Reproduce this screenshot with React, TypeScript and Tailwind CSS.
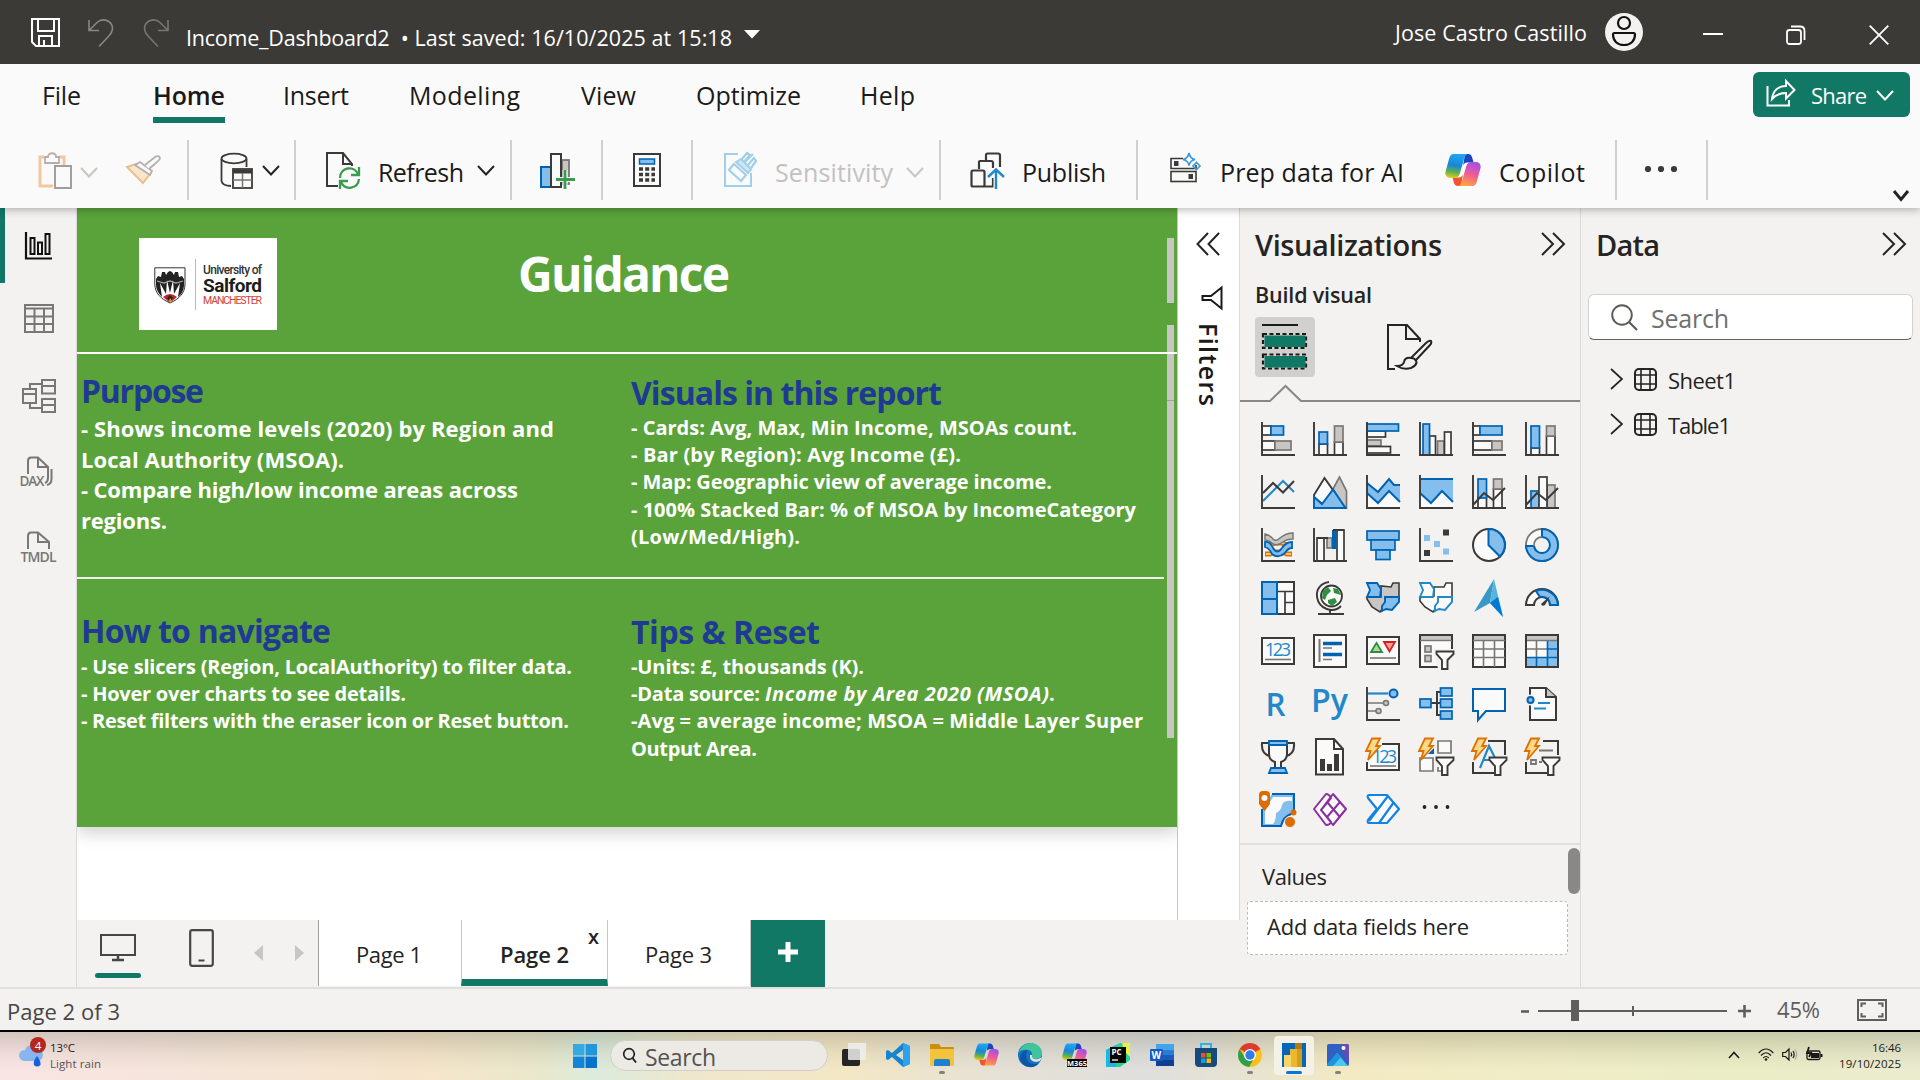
import React, { useLayoutEffect, useRef, useState } from "react";

const D = "#3b3a38";
const B = "#0063b1";
const LB = "#83beec";
const G = "#797774";
const LG = "#c8c6c4";
const W = "#fafafa";

/** One line of text whose tracking is adjusted so that it fills the length given by its class. */
function Fit({ children, className, vertical = false }: { children: string; className: string; vertical?: boolean }) {
  const box = useRef<HTMLDivElement>(null);
  const inner = useRef<HTMLSpanElement>(null);
  const [ls, setLs] = useState(0);
  useLayoutEffect(() => {
    if (!box.current || !inner.current) return;
    const side = vertical ? "height" : "width";
    const natural = inner.current.getBoundingClientRect()[side];
    setLs((box.current.getBoundingClientRect()[side] - natural) / Math.max(1, children.length - 1));
  }, [children, vertical]);
  return (
    <div ref={box} className={"shrink-0 whitespace-pre " + className}>
      <span ref={inner} style={{ letterSpacing: ls }}>{children}</span>
    </div>
  );
}

function Svg({ w, h, className = "", children }: { w: number; h: number; className?: string; children: React.ReactNode }) {
  return (
    <svg width={w} height={h} viewBox={`0 0 ${w} ${h}`} fill="none" className={"shrink-0 overflow-visible " + className}>
      {children}
    </svg>
  );
}

function Chevron({ className = "", color = "#252423", w = 18, sw = 2 }: { className?: string; color?: string; w?: number; sw?: number }) {
  return (
    <Svg w={w} h={11} className={className}>
      <path d={`M1 1 L${w / 2} 9.5 L${w - 1} 1`} stroke={color} strokeWidth={sw} />
    </Svg>
  );
}

const Sep = ({ className }: { className: string }) => <div className={"mt-[10px] h-[60px] w-[2px] shrink-0 bg-[#d0d0d0] " + className} />;

function CopilotIcon({ w, h, className = "", id }: { w: number; h: number; className?: string; id: string }) {
  return (
    <svg width={w} height={h} viewBox="0 0 36 32" fill="none" className={"shrink-0 " + className}>
      <defs>
        <linearGradient id={id + "a"} x1="10" y1="0" x2="6" y2="25" gradientUnits="userSpaceOnUse">
          <stop stopColor="#1ea7f2" /><stop offset=".45" stopColor="#1a86d8" /><stop offset=".72" stopColor="#5fb24a" /><stop offset="1" stopColor="#ffd21c" />
        </linearGradient>
        <linearGradient id={id + "b"} x1="30" y1="8" x2="22" y2="32" gradientUnits="userSpaceOnUse">
          <stop stopColor="#a14df0" /><stop offset=".5" stopColor="#ee5a96" /><stop offset="1" stopColor="#ffa23f" />
        </linearGradient>
      </defs>
      <path d="M20 0h3c2.500 0 3.600 1.500 4.300 4l1.300 4.500H22c-2 0-3.500 1.500-4 3.500z" fill="#1c45c4" />
      <path d="M16 32h-3c-2.500 0-3.600-1.500-4.300-4L7.500 23.500H14c2 0 3.500-1.500 4-3.500z" fill="#ee5530" />
      <path d="M8.500 0H23c-2.300.400-3.300 2.500-4 5l-4 14c-.8 2.900-2.300 5-5.500 5H5.200C1.500 24-.4 21 .6 17.500L4 5C5 1.800 6.200 0 8.500 0z" fill={`url(#${id}a)`} />
      <path d="M27.500 32H13c2.300-.4 3.300-2.500 4-5l4-14c.8-2.900 2.300-5 5.500-5h4.300c3.700 0 5.600 3 4.600 6.500L32 27c-1 3.200-2.200 5-4.500 5z" fill={`url(#${id}b)`} />
    </svg>
  );
}

function TitleBar() {
  return (
    <div className="flex h-[64px] items-start bg-[#3b3a37] text-white">
      <Svg w={30} h={30} className="ml-[31px] mt-[18px]">
        <path d="M1 1H28V28H5L1 24Z M7 1V13H23V1 M8 28V18H21V28 M13 22V27" stroke="#fff" strokeWidth="2" />
      </Svg>
      <Svg w={26} h={29} className="ml-[27px] mt-[18px]">
        <path d="M1 2V12.500H11 M1.500 12L9 4.500C15-1 24 3 24.500 10C24.500 14 23 16 20 19L11 28.500" stroke="#8a8886" strokeWidth="1.600" />
      </Svg>
      <Svg w={26} h={29} className="ml-[29px] mt-[18px]">
        <path d="M25 2V12.500H15 M24.500 12L17 4.500C11-1 2 3 1.500 10C1.500 14 3 16 6 19L15 28.500" stroke="#797775" strokeWidth="1.600" />
      </Svg>
      <Fit className="ml-[17px] mt-[23px] w-[209px] text-[21.5px] leading-[30px]">Income_Dashboard2 </Fit>
      <Fit className="w-[337px] text-[21.5px] leading-[30px] mt-[23px]"> • Last saved: 16/10/2025 at 15:18</Fit>
      <Svg w={16} h={9} className="ml-[12px] mt-[30px]"><path d="M0 0H16L8 8.500Z" fill="#fff" /></Svg>
      <Fit className="ml-auto mt-[18px] w-[192px] text-[21.5px] leading-[30px]">Jose Castro Castillo</Fit>
      <Svg w={38} h={38} className="ml-[18px] mt-[13px]">
        <circle cx="19" cy="19" r="19" fill="#f3f2f1" />
        <circle cx="19" cy="10" r="6" stroke="#111" strokeWidth="2.200" />
        <path d="M9.500 20H28.500Q30 20 30 21.500C30 28 25.500 32 19 32S8 28 8 21.500Q8 20 9.500 20Z" stroke="#111" strokeWidth="2.200" />
      </Svg>
      <div className="ml-[60px] mt-[33px] h-[2px] w-[20px] shrink-0 bg-white" />
      <Svg w={20} h={20} className="ml-[63px] mt-[25px]">
        <rect x="1" y="5" width="14" height="14" rx="2.500" stroke="#fff" strokeWidth="1.800" />
        <path d="M5 1.500H14Q18.500 1.500 18.500 6V15" stroke="#fff" strokeWidth="1.800" />
      </Svg>
      <Svg w={20} h={20} className="ml-[63px] mr-[31px] mt-[25px]">
        <path d="M.7.700L19.300 19.300M19.300.700L.7 19.300" stroke="#fff" strokeWidth="1.800" />
      </Svg>
    </div>
  );
}

function Menu() {
  const t = "mt-[16px] text-[25px] leading-[30px] ";
  return (
    <div className="flex h-[66px] items-start text-[#1b1a19]">
      <Fit className={t + "ml-[42px] w-[39px]"}>File</Fit>
      <div className="ml-[72px] shrink-0">
        <Fit className={t + "w-[72px] font-semibold"}>Home</Fit>
        <div className="mt-[7px] h-[6px] w-[72px] bg-[#117865]" />
      </div>
      <Fit className={t + "ml-[58px] w-[66px]"}>Insert</Fit>
      <Fit className={t + "ml-[60px] w-[111px]"}>Modeling</Fit>
      <Fit className={t + "ml-[61px] w-[55px]"}>View</Fit>
      <Fit className={t + "ml-[60px] w-[105px]"}>Optimize</Fit>
      <Fit className={t + "ml-[59px] w-[55px]"}>Help</Fit>
      <div className="ml-auto mr-[10px] mt-[8px] flex h-[45px] w-[157px] shrink-0 items-start rounded-[6px] bg-[#117865] text-white">
        <Svg w={30} h={28} className="ml-[13px] mt-[7px]">
          <path d="M1.500 7V26.500H23V21" stroke="#fff" strokeWidth="2" />
          <path d="M6 20C7 12 12 7 20 7V2L28.500 11L20 19.500V14C14 14 10 15.500 6 20Z" stroke="#fff" strokeWidth="2" />
        </Svg>
        <Fit className="ml-[15px] mt-[8px] w-[56px] text-[22px] leading-[30px]">Share</Fit>
        <Chevron color="#fff" className="ml-[9px] mt-[18px]" />
      </div>
    </div>
  );
}

function Ribbon() {
  const t = "mt-[27px] text-[25px] leading-[30px] text-[#1b1a19] ";
  return (
    <div className="flex h-[78px] items-start">
      <Svg w={34} h={37} className="ml-[38px] mt-[22px]">
        <path d="M6 5H2V34H15M21 5H26V13" stroke="#efc7a0" strokeWidth="3" />
        <path d="M7 11V5H10C10 0 18 0 18 5H21V11Z" fill="#fafafa" stroke="#b3b0ad" strokeWidth="1.800" />
        <rect x="17" y="14" width="16" height="22" fill="#fafafa" stroke="#a19f9d" strokeWidth="2" />
      </Svg>
      <Chevron color="#c8c6c4" className="ml-[8px] mt-[37px]" />
      <Svg w={36} h={30} className="ml-[28px] mt-[25px]">
        <path d="M1 12L10 9L24 19L17 28Z" fill="#fbe6cc" stroke="#eabf90" strokeWidth="2" />
        <path d="M9 10L14 7L26 16L24 20Z" fill="#fafafa" stroke="#b3b0ad" strokeWidth="1.800" />
        <path d="M19 10L29 2Q33 0 34 3Q34 5 31 7L23 14" fill="#fafafa" stroke="#b3b0ad" strokeWidth="1.800" />
      </Svg>
      <Sep className="ml-[25px]" />
      <Svg w={33} h={36} className="ml-[31px] mt-[23px]">
        <ellipse cx="14" cy="5.500" rx="12.500" ry="4.800" stroke={D} strokeWidth="1.800" />
        <path d="M1.500 6V28C2 31 6 33 11 33M26.500 6V14" stroke={D} strokeWidth="1.800" />
        <rect x="13" y="16" width="19" height="19" fill="#fafafa" stroke={D} strokeWidth="1.800" />
        <path d="M13 18.500H32" stroke={D} strokeWidth="4" />
        <path d="M22.500 20V35M13 27H32" stroke={G} strokeWidth="1.500" />
      </Svg>
      <Chevron className="ml-[9px] mt-[35px]" />
      <Sep className="ml-[14px]" />
      <Svg w={34} h={37} className="ml-[30px] mt-[22px]">
        <path d="M12 34H1V1H17L26 12V14M17 1V12H26" stroke={D} strokeWidth="2" />
        <path d="M14 26C14 15 28 13 32 22M33 15V23H25M33 27C32 37 19 39 15 30M14 37V29H22" stroke="#3a9b4e" strokeWidth="2.300" />
      </Svg>
      <Fit className={t + "ml-[18px] w-[86px]"}>Refresh</Fit>
      <Chevron className="ml-[13px] mt-[35px]" />
      <Sep className="ml-[15px]" />
      <Svg w={36} h={37} className="ml-[28px] mt-[22px]">
        <rect x="22" y="8" width="7" height="24" fill={LG} stroke={G} strokeWidth="1.800" />
        <rect x="1" y="15" width="10" height="20" fill={LB} stroke={B} strokeWidth="2" />
        <rect x="11" y="2" width="10" height="33" fill={W} stroke={D} strokeWidth="2" />
        <path d="M25 18V37M16 27.500H35" stroke="#fafafa" strokeWidth="5" />
        <path d="M25 18V37M16 27.500H35" stroke="#3a9b4e" strokeWidth="2.800" />
      </Svg>
      <Sep className="ml-[25px]" />
      <Svg w={28} h={34} className="ml-[30px] mt-[23px]">
        <rect x="1" y="1" width="26" height="32" stroke={D} strokeWidth="2" fill={W} />
        <rect x="6.500" y="6" width="15" height="5" fill={LB} stroke={B} strokeWidth="1.500" />
        <path d="M6 16H22M6 21.500H22M6 27H22" stroke={D} strokeWidth="3.400" strokeDasharray="4 2.200" />
      </Svg>
      <Sep className="ml-[30px]" />
      <Svg w={32} h={36} className="ml-[31px] mt-[21px]">
        <path d="M14 3H1V35H27V22" stroke="#9fcfe9" strokeWidth="2" />
        <path d="M10 13L5 19L17 30L22 24Z" stroke="#9fcfe9" strokeWidth="2.200" />
        <path d="M12 11L17 8L27 18L24 22Z" fill="#cfe6f3" stroke="#9fcfe9" strokeWidth="2" />
        <path d="M18 8L23 2L26 4L20 11M24 14L30 7L32 10L27 17M21 11L29 3" stroke="#9fcfe9" strokeWidth="2.200" />
      </Svg>
      <Fit className={"mt-[27px] text-[25px] leading-[30px] ml-[19px] w-[118px] text-[#c3c1bf]"}>Sensitivity</Fit>
      <Chevron color="#c8c6c4" className="ml-[13px] mt-[37px]" />
      <Sep className="ml-[15px]" />
      <Svg w={34} h={37} className="ml-[29px] mt-[22px]">
        <path d="M16 8V3Q16 1.500 17.500 1.500H28Q30 1.500 30 3.500V15M9 17V10Q9 9 10 9H21Q23 9 23 11V16" stroke={D} strokeWidth="2.200" />
        <rect x="1.500" y="18.500" width="13" height="16" rx="1.500" stroke={D} strokeWidth="2.200" />
        <path d="M14.500 34.500H23V26" stroke={D} strokeWidth="2.200" />
        <path d="M26 37V18M18 25L26 17L34 25" stroke="#fafafa" strokeWidth="5" />
        <path d="M26 37V18M18 25L26 17.500L34 25" stroke="#2288c9" strokeWidth="2.400" />
      </Svg>
      <Fit className={t + "ml-[18px] w-[84px]"}>Publish</Fit>
      <Sep className="ml-[30px]" />
      <Svg w={31} h={30} className="ml-[32px] mt-[22px]">
        <path d="M13 6.500H1V16.500H26V13" stroke={D} strokeWidth="1.600" />
        <rect x="4" y="9" width="4.500" height="5" fill={D} />
        <rect x="1" y="19.500" width="25" height="10" stroke={D} strokeWidth="1.600" />
        <rect x="18.500" y="22" width="4.500" height="5" fill={D} />
        <path d="M19 1Q20 6.500 25 7.500Q20 8.500 19 13.500Q18 8.500 13 7.500Q18 6.500 19 1Z" stroke="#3a96dd" strokeWidth="1.600" fill={W} />
        <path d="M26.500 10.500L30 14L26.500 17.500L23 14Z" stroke="#3a96dd" strokeWidth="1.600" />
      </Svg>
      <Fit className={t + "ml-[19px] w-[184px]"}>Prep data for AI</Fit>
      <CopilotIcon id="rb" w={36} h={32} className="ml-[41px] mt-[24px]" />
      <Fit className={t + "ml-[18px] w-[86px]"}>Copilot</Fit>
      <Sep className="ml-[30px]" />
      <Svg w={34} h={8} className="ml-[27px] mt-[35px]">
        <circle cx="4" cy="4" r="3.100" fill={D} /><circle cx="17" cy="4" r="3.100" fill={D} /><circle cx="30" cy="4" r="3.100" fill={D} />
      </Svg>
      <Sep className="ml-[28px]" />
      <Chevron w={16} sw={3} className="ml-auto mr-[11px] mt-[60px]" />
    </div>
  );
}

function SideNav() {
  const g = "#797775";
  return (
    <div className="flex w-[77px] shrink-0 border-r border-[#dcdad8] bg-[#f3f2f1]">
      <div className="h-[75px] w-[5px] shrink-0 bg-[#117865]" />
      <div className="flex flex-col items-start pl-[15px]">
        <Svg w={27} h={28} className="ml-[5px] mt-[24px]">
          <path d="M1 0V26.500H27" stroke="#111" strokeWidth="2.200" />
          <path d="M5.500 6H9.500V22H5.500ZM13 10.500H17V22H13ZM20.500 2H24.500V22H20.500Z" stroke="#111" strokeWidth="2" />
        </Svg>
        <Svg w={30} h={29} className="ml-[4px] mt-[44px]">
          <path d="M1 1H29V28H1ZM1 4.500H29M1 12.500H29M1 20H29M10.500 4V28M20 4V28" stroke={g} strokeWidth="2" />
        </Svg>
        <Svg w={34} h={34} className="ml-[2px] mt-[46px]">
          <path d="M20 1H33V14.500H20ZM20 7H33M20 20H33V33H20ZM20 26H33M1 10H14V24H1ZM1 15H14M8 10V5H20M8 24V29H20" stroke={g} strokeWidth="2" />
        </Svg>
        <Svg w={34} h={32} className="mt-[43px]">
          <path d="M8 18V5Q8 1.500 11 1.500H18L28 11V22Q28 26 25 27M18 1.500V11H28M31.500 13V23Q31.500 28 27 29" stroke={g} strokeWidth="2" />
          <text x="-.5" y="30" textLength="25" fontFamily="Open Sans" fontSize="13.500" fontWeight="600" fill={g}>DAX</text>
        </Svg>
        <Svg w={37} h={32} className="mt-[43px]">
          <path d="M8 18V5Q8 1.500 11 1.500H18L29 11V18M18 1.500V11H29" stroke={g} strokeWidth="2" />
          <text x=".5" y="31" textLength="36" fontFamily="Open Sans" fontSize="14" fontWeight="600" fill={g}>TMDL</text>
        </Svg>
      </div>
    </div>
  );
}

function Report() {
  const big = "text-[22px] leading-[30.5px] ";
  const sm = "text-[20px] leading-[27.2px] ";
  const head = "text-[32px] leading-[40px] text-[#1f3a93] ";
  return (
    <div className="relative flex h-[619px] flex-col bg-[#5aa33a] font-bold text-white shadow-[0_6px_16px_rgba(0,0,0,0.18)]">
      <div className="flex h-[144px] shrink-0 items-start">
        <div className="ml-[62px] mt-[30px] flex h-[92px] w-[138px] items-start bg-white">
          <Svg w={32} h={37} className="ml-[15px] mt-[29px]">
            <path d="M.8.800H31V17C31 26 25 32 16 36C7 32 .8 26 .8 17Z" fill="#fff" stroke="#333" strokeWidth="1" />
            <path d="M2 12L4 9L7 10L8 5H11L12 8L14 5L16 4L18 5L20 8L21 5H24L25 10L28 9L30 12V18C30 23 27 28 24 30L26 16L20 27L19 13L16 26L13 13L12 27L6 16L8 30C4 26 2 22 2 18Z" fill="#222" />
            <path d="M3 14L10 16L16 14L22 16L29 14" stroke="#aaa" strokeWidth="1.200" />
            <path d="M9 30Q16 24 23 30L16 36Z" fill="#b52a2a" />
            <path d="M13 31L16 28L19 31L16 35Z" fill="#2b2020" />
            <path d="M15 34L16 31L18 34L16 36Z" fill="#d8a52a" />
          </Svg>
          <div className="ml-[8.500px] mt-[21px] h-[51px] w-[1.500px] bg-[#e9a5a2]" />
          <div className="ml-[7px] mt-[26px] font-['Roboto']">
            <Fit className="w-[59px] text-[12px] font-medium leading-[13px] text-[#333]">University of</Fit>
            <Fit className="w-[59px] text-[19px] font-bold leading-[17px] text-[#1c1c1c]">Salford</Fit>
            <Fit className="w-[59px] text-[10.5px] font-normal leading-[13px] text-[#d0403c]">MANCHESTER</Fit>
          </div>
        </div>
        <Fit className="ml-[241px] mt-[36px] w-[212px] text-[48px] leading-[60px]">Guidance</Fit>
      </div>
      <div className="h-[2px] shrink-0 bg-white" />
      <div className="flex h-[223px] shrink-0 pl-[4px]">
        <div className="w-[550px] pt-[17px]">
          <Fit className={head + "mb-[2px] w-[123px]"}>Purpose</Fit>
          <Fit className={big + "w-[473px]"}>- Shows income levels (2020) by Region and</Fit>
          <Fit className={big + "w-[263px]"}>Local Authority (MSOA).</Fit>
          <Fit className={big + "w-[437px]"}>- Compare high/low income areas across</Fit>
          <Fit className={big + "w-[86px]"}>regions.</Fit>
        </div>
        <div className="pt-[19px]">
          <Fit className={head + "mb-px w-[311px]"}>Visuals in this report</Fit>
          <Fit className={sm + "w-[446px]"}>- Cards: Avg, Max, Min Income, MSOAs count.</Fit>
          <Fit className={sm + "w-[330px]"}>- Bar (by Region): Avg Income (£).</Fit>
          <Fit className={sm + "w-[421px]"}>- Map: Geographic view of average income.</Fit>
          <Fit className={sm + "w-[505px]"}>- 100% Stacked Bar: % of MSOA by IncomeCategory</Fit>
          <Fit className={sm + "w-[169px]"}>(Low/Med/High).</Fit>
        </div>
      </div>
      <div className="h-[2px] w-[1087px] shrink-0 bg-[#eef5ea]" />
      <div className="flex pl-[4px]">
        <div className="w-[550px] pt-[32px]">
          <Fit className={head + "mb-[2px] w-[250px]"}>How to navigate</Fit>
          <Fit className={sm + "w-[491px]"}>- Use slicers (Region, LocalAuthority) to filter data.</Fit>
          <Fit className={sm + "w-[325px]"}>- Hover over charts to see details.</Fit>
          <Fit className={sm + "w-[488px]"}>- Reset filters with the eraser icon or Reset button.</Fit>
        </div>
        <div className="pt-[33px]">
          <Fit className={head + "mb-px w-[189px]"}>Tips &amp; Reset</Fit>
          <Fit className={sm + "w-[233px]"}>-Units: £, thousands (K).</Fit>
          <div className="flex">
            <Fit className={sm + "w-[134px]"}>-Data source: </Fit>
            <Fit className={sm + "w-[284px] italic"}>Income by Area 2020 (MSOA)</Fit>
            <Fit className={sm + "w-[4px]"}>.</Fit>
          </div>
          <Fit className={sm + "w-[512px]"}>-Avg = average income; MSOA = Middle Layer Super</Fit>
          <Fit className={sm + "w-[126px]"}>Output Area.</Fit>
        </div>
      </div>
      <div className="absolute left-[1090px] top-[30px] h-[65px] w-[7px] bg-[#c8c6c4]" />
      <div className="absolute left-[1090px] top-[117px] h-[413px] w-[7px] bg-[#c8c6c4]" />
      <div className="absolute left-[1090px] top-[144px] h-[2px] w-[9px] bg-white" />
      <div className="absolute left-[1090px] top-[192px] h-px w-[7px] bg-[#93ab86]" />
    </div>
  );
}

function PageTabs() {
  const t = "text-[22px] leading-[30px] text-[#252423] ";
  return (
    <div className="flex h-[67px] shrink-0 items-start bg-[#f3f2f1]">
      <div className="ml-[18px] mt-[14px] flex w-[46px] flex-col items-center">
        <Svg w={36} h={27} className="-ml-px">
          <rect x="1" y="1" width="34" height="20" stroke="#484644" strokeWidth="2" />
          <path d="M18 21V26M12 26H24" stroke="#484644" strokeWidth="2.400" />
        </Svg>
        <div className="mt-[12px] h-[5px] w-[46px] rounded-full bg-[#117865]" />
      </div>
      <Svg w={25} h={38} className="ml-[48px] mt-[9px]">
        <rect x="1.200" y="1.200" width="22.600" height="35.600" rx="2" stroke="#484644" strokeWidth="2.200" />
        <path d="M9.500 31.500H15.500" stroke="#484644" strokeWidth="2" />
      </Svg>
      <Svg w={9} h={16} className="ml-[40px] mt-[25px]"><path d="M9 0V16L0 8Z" fill="#c8c6c4" /></Svg>
      <Svg w={9} h={16} className="ml-[32px] mt-[25px]"><path d="M0 0V16L9 8Z" fill="#c8c6c4" /></Svg>
      <div className="ml-[14px] h-[66px] w-[143px] border-l border-[#a19f9d] bg-white pl-[37px] pt-[19px]">
        <Fit className={t + "w-[66px]"}>Page 1</Fit>
      </div>
      <div className="flex h-[66px] w-[147px] items-start border-x border-b-[7px] border-x-[#c8c6c4] border-b-[#117865] bg-white">
        <Fit className={t + "ml-[38px] mt-[19px] w-[69px] font-semibold"}>Page 2</Fit>
        <span className="ml-[19px] mt-[2px] text-[20px] font-semibold leading-[30px] text-[#252423]">x</span>
      </div>
      <div className="h-[66px] w-[143px] border-r border-[#c8c6c4] bg-white pl-[37px] pt-[19px]">
        <Fit className={t + "w-[67px]"}>Page 3</Fit>
      </div>
      <div className="flex h-[67px] w-[74px] items-center justify-center bg-[#117865] pb-[3px]">
        <Svg w={22} h={22}><path d="M11 1V21M1 11H21" stroke="#fff" strokeWidth="5" /></Svg>
      </div>
    </div>
  );
}

function Filters() {
  return (
    <div className="flex h-[712px] w-[63px] shrink-0 flex-col items-start border-x border-[#dcdad8] border-l-[#c8c6c4] bg-white">
      <Svg w={24} h={24} className="ml-[18px] mt-[24px]">
        <path d="M12 1L1.500 12L12 23M23 1L12.500 12L23 23" stroke="#252423" strokeWidth="2" />
      </Svg>
      <Svg w={22} h={24} className="ml-[23px] mt-[30px]">
        <path d="M20.500 1.500V22.500L10 14H1.500V10H10Z" stroke="#1b1a19" strokeWidth="2" />
      </Svg>
      <Fit vertical className="ml-[16px] mt-[13px] h-[83px] text-[25px] font-semibold leading-[30px] text-[#1b1a19] [writing-mode:vertical-rl]">Filters</Fit>
    </div>
  );
}

const Axis = () => <path d="M1 0V33H34" stroke={D} strokeWidth="1.900" />;
type R = [number, number, number, number, "b" | "g" | "w"];
const Bars = ({ r }: { r: R[] }) => (
  <>
    {r.map(([x1, y1, x2, y2, k], i) => (
      <rect key={i} x={x1} y={y1} width={x2 - x1} height={y2 - y1} strokeWidth="1.700"
        fill={k === "b" ? LB : k === "g" ? LG : W} stroke={k === "b" ? B : k === "g" ? G : D} />
    ))}
  </>
);
const Bolt = () => <path d="M6-1.500H14L10 6H14L2 20L4.500 11H0Z" fill="#fbd98a" stroke="#e07000" strokeWidth="1.800" />;
const Funnel = () => <path d="M17.500 17.500H34.500V20L28.500 26V35H23V26L17.500 20Z" fill={W} stroke={D} strokeWidth="1.900" />;

const icons: React.ReactNode[] = [
  <><Bars r={[[1, 4, 10, 13, "w"], [1, 19, 14, 28, "w"], [14, 19, 30, 28, "g"], [10, 4, 22.5, 13, "b"]]} /><Axis /></>,
  <><Bars r={[[6, 22, 14.5, 33, "w"], [6, 10, 14.5, 22, "b"], [21.500, 20, 30, 33, "w"], [21.500, 4, 30, 20, "g"]]} /><Axis /></>,
  <><Bars r={[[1, 9, 19.5, 15, "w"], [1, 18, 15, 24, "g"], [1, 24.500, 24.5, 31, "w"], [1, 2, 32.5, 9, "b"]]} /><Axis /></>,
  <><Bars r={[[10.5, 14, 16.5, 33, "w"], [18.5, 19, 25, 33, "g"], [25.5, 10, 32, 33, "w"], [4, 2, 10.5, 33, "b"]]} /><Axis /></>,
  <><Bars r={[[1, 4, 8, 13, "w"], [8, 4, 30, 13, "b"], [1, 19, 20, 28, "w"], [20, 19, 30, 28, "g"]]} /><Axis /></>,
  <><Bars r={[[6, 26, 14.5, 33, "w"], [6, 4, 14.5, 26, "b"], [21.5, 14, 30, 33, "w"], [21.5, 4, 30, 14, "g"]]} /><Axis /></>,
  <><path d="M2 26L22 6L33 17" stroke="#2288c9" strokeWidth="2" /><path d="M2 18L12 8L22 17.500L33 6" stroke={D} strokeWidth="2" /><Axis /></>,
  <><path d="M20 14L26.500 2L33.500 16V33H20Z" fill={LG} stroke={G} strokeWidth="1.700" /><path d="M1 20L11.500 3L22 18L10 30L1 22Z" fill={W} stroke={D} strokeWidth="1.900" /><path d="M1 22L9 29L20 14.500L32.500 33H1Z" fill={LB} stroke={B} strokeWidth="2" /></>,
  <><path d="M2 19V33H34V27L23 16L12 27Z" fill={W} /><path d="M1 8L12 17L23 4L28 10H34V27L23 16L12 28L1 18Z" fill={LB} /><path d="M1 8L12 17L23 4L28 10H34M34 27L23 16L12 28L1 18" stroke={B} strokeWidth="2" /><Axis /></>,
  <><path d="M2 19V33H34V27L23 16L12 27Z" fill={W} /><path d="M1 4H34V27L23 16L12 28L1 18Z" fill={LB} /><path d="M1 4H34M34 27L23 16L12 28L1 18" stroke={B} strokeWidth="2" /><Axis /></>,
  <><Bars r={[[6, 22, 14.5, 33, "w"], [6, 4, 14.5, 23, "b"], [21.5, 14, 30, 33, "w"], [21.5, 4, 30, 14, "g"]]} /><path d="M1 30L12 18L21 25L33 13" stroke={D} strokeWidth="2" /><Axis /></>,
  <><Bars r={[[22, 10, 30, 33, "g"], [6, 16, 14.5, 33, "b"], [14, 2, 22, 33, "w"]]} /><path d="M1 30L12 18L21 25L33 13" stroke={D} strokeWidth="2" /><Axis /></>,
  <><path d="M4 17H9L14 15L21 15L26 17H31M4 26H9L14 24L21 24L26 26H31" stroke="#e07000" strokeWidth="5" /><path d="M5 17H9L14 15L21 15L26 17H30M5 26H9L14 24L21 24L26 26H30" stroke="#fcc46b" strokeWidth="1.800" /><path d="M4 6Q9 7 12 11Q15 14 19 10Q25 5 32 5V11Q26 11 22 14Q17 18 12 16Q8 12 4 12Z" fill={LG} stroke={G} strokeWidth="1.500" /><path d="M4 14Q9 13 12 20Q16 27 21 20Q25 14 31 14V20Q27 20 24 25Q17 31 11 26Q8 20 4 19Z" fill={LB} stroke={B} strokeWidth="1.800" /><Axis /></>,
  <><Bars r={[[4, 10, 11, 33, "w"], [14, 10, 19, 20, "g"], [24, 2, 31, 33, "w"]]} /><rect x="19" y="2" width="4.500" height="19" fill={B} /><path d="M4 10H15M20 2H31" stroke={D} strokeWidth="1.800" /><Axis /></>,
  <><Bars r={[[1, 3, 33, 12, "b"], [5, 12, 29, 22, "b"], [10, 22, 24, 31.500, "b"]]} /></>,
  <><Axis /><rect x="24" y="1.500" width="6" height="6" fill={D} /><rect x="5" y="22" width="6" height="6" fill={D} /><rect x="5" y="7" width="6" height="6" fill={LB} /><rect x="15" y="13" width="6" height="6" fill={LB} /><rect x="24" y="20.500" width="6" height="6" fill={LB} /></>,
  <><circle cx="17" cy="17" r="16" fill={W} stroke={D} strokeWidth="2" /><path d="M16.500 1A16 16 0 0 1 28 28.500L16.500 17Z" fill={LB} stroke={B} strokeWidth="2" /></>,
  <><circle cx="17" cy="17" r="12" stroke={W} strokeWidth="8" /><circle cx="17" cy="17" r="16" stroke={G} strokeWidth="1.800" /><path d="M17 1A16 16 0 1 1 1 18H9A8 8 0 1 0 17 9Z" fill={LB} stroke={B} strokeWidth="2" /><path d="M9 18A8 8 0 0 1 17 9" stroke={G} strokeWidth="1.800" /></>,
  <><rect x="1" y="1" width="32" height="32" fill={W} stroke={D} strokeWidth="2" /><path d="M17 10.500H33M24 10.500V33M24 21.500H33" stroke={D} strokeWidth="1.700" /><path d="M1 1H16V33H1ZM1 18H16" fill={LB} stroke={B} strokeWidth="2" /></>,
  <><circle cx="18.500" cy="15" r="10.500" fill={W} stroke={D} strokeWidth="1.800" /><path d="M16 1C8 2 3 8 4 16C6 28 20 33 28 25M17 28V33M5 33H31" stroke={D} strokeWidth="1.900" /><path d="M10 10L15 6L18 10L14 14L12 19L9 17ZM20 7L25 8L28 14L21 12ZM15 19L22 17L24 21L19 25L15 22Z" fill="#2f8f3f" /></>,
  <><path d="M1 16H15V5L25 6L27 2H33V20L28 26L17 27L14 31L6 26L1 18Z" fill={LG} stroke={D} strokeWidth="1.600" /><path d="M1 2H11L15 8L14 16H1L4 9ZM19 16H33V21L26 29L20 28L16 30V25L19 21Z" fill={LB} stroke={B} strokeWidth="1.900" /></>,
  <><path d="M1 16L15 15V6L25 6L27 2H33V20L28 26L17 27L14 31L6 26L1 20Z" fill={W} stroke={D} strokeWidth="1.600" /><path d="M1 2H11L15 8L14 16H1L4 9ZM19 16H33V21L26 29L20 28L16 30V25L19 21Z" fill={W} stroke="#2288c9" strokeWidth="1.900" /></>,
  <><path d="M22-2L2 31L18 22Z" fill="#3999c6" /><path d="M22-2L31 36L18 22Z" fill="#57b5dc" /><path d="M18 22L26 16L31 36Z" fill="#0078d4" /></>,
  <><path d="M1 24A16 16 0 0 1 33 24H25A8 8 0 0 0 9 24Z" fill={W} stroke={D} strokeWidth="2" /><path d="M11 10A16 16 0 0 1 33 24H25A8 8 0 0 0 15 16Z" fill={LB} stroke={B} strokeWidth="2" /><path d="M25 15L20 24Q17 26 16 23Z" fill={D} /></>,
  <><rect x="1" y="4" width="32" height="26" fill={W} stroke={D} strokeWidth="2" /><text x="4" y="22" textLength="26" fontSize="18" fontFamily="Open Sans" fill="#2288c9">123</text><path d="M4 25.500H30" stroke={G} strokeWidth="1.600" /></>,
  <><rect x="1" y="1" width="32" height="32" fill={W} stroke={D} strokeWidth="2" /><path d="M6.500 5V28" stroke={G} strokeWidth="2" /><path d="M10 9.500H29M10 20.500H29" stroke={B} strokeWidth="3.500" /><path d="M10 14H19M10 25.500H19" stroke={G} strokeWidth="1.600" /></>,
  <><rect x="1" y="3" width="32" height="27" fill={W} stroke={D} strokeWidth="2" /><path d="M5 18L10.500 9L16 18Z" fill="#a6dba6" stroke="#2f8f3f" strokeWidth="1.800" /><path d="M18 8H29L23.500 17.500Z" fill="#ff9a92" stroke="#d22020" strokeWidth="1.800" /><path d="M4 24H30" stroke={G} strokeWidth="1.600" /></>,
  <><rect x="1" y="1" width="32" height="32" fill={W} /><path d="M19 33H1V1H33V15" stroke={D} strokeWidth="2" /><rect x="2" y="2" width="30" height="4" fill={LG} /><path d="M1 6.500H33" stroke={G} strokeWidth="1.400" /><rect x="6" y="12" width="6" height="6" fill={LG} stroke={G} strokeWidth="1.700" /><rect x="6" y="21.500" width="6" height="6" fill={LG} stroke={G} strokeWidth="1.700" /><path d="M15 15H36V37H20L15 22Z" fill="#f3f2f1" /><Funnel /></>,
  <><rect x="1" y="1" width="32" height="32" fill={W} stroke={D} strokeWidth="2" /><rect x="2" y="2" width="30" height="4" fill={LG} /><path d="M1 6.500H33M1 15H33M1 23.500H33M11.500 6V33M22.500 6V33" stroke={G} strokeWidth="1.600" /></>,
  <><rect x="1" y="1" width="32" height="32" fill={W} /><path d="M22.500 6H33V33H1V24H22.500Z" fill={LB} /><rect x="2" y="2" width="30" height="4" fill={LG} /><path d="M1 6.500H33M1 15H22M11.500 6V24" stroke={G} strokeWidth="1.600" /><path d="M22.500 7V32M1 23.500H33M22 15H33M11.500 24V32" stroke={B} strokeWidth="1.600" /><rect x="1" y="1" width="32" height="32" stroke={D} strokeWidth="2" /></>,
  <><text x="4.500" y="28.500" textLength="20" lengthAdjust="spacingAndGlyphs" fontSize="33" fontFamily="Open Sans" fontWeight="600" fill="#2288c9">R</text></>,
  <><text x="-2" y="24.500" textLength="37" lengthAdjust="spacingAndGlyphs" fontSize="33" fontFamily="Open Sans" fontWeight="600" fill="#2288c9">Py</text></>,
  <><path d="M2 6.500H22" stroke="#2288c9" strokeWidth="2.200" /><path d="M2 16H17M2 24H10" stroke={G} strokeWidth="1.600" /><circle cx="27.500" cy="6.500" r="4" fill={LB} stroke={B} strokeWidth="2" /><circle cx="20" cy="16" r="2.500" fill={LG} stroke={G} strokeWidth="1.600" /><circle cx="12.500" cy="24" r="2.500" fill={LG} stroke={G} strokeWidth="1.600" /><Axis /></>,
  <><path d="M12 16H22M22 5H18V28H22" stroke={D} strokeWidth="2" /><Bars r={[[1, 12, 12, 20.500, "b"], [21.5, 1, 33, 9, "b"], [21.5, 12, 33, 20.500, "b"], [21.5, 24, 33, 32, "b"]]} /></>,
  <path d="M1 2H33V24H14L6 33V24H1Z" fill={W} stroke={B} strokeWidth="2" />,
  <><path d="M5 18V33H31V10L21 1H5V9" fill={W} stroke={D} strokeWidth="2" /><path d="M21 1V10H31" fill={LG} stroke={D} strokeWidth="2" /><circle cx="5.500" cy="13" r="5.500" fill="#f3f2f1" /><circle cx="5.500" cy="13" r="3" fill={LB} stroke={B} strokeWidth="2" /><path d="M13 16H25M9 21.500H21" stroke="#2288c9" strokeWidth="1.900" /></>,
  <><path d="M8 3H1Q0 14 9 16M26 3H33Q34 14 25 16" stroke={D} strokeWidth="2" /><path d="M8 3H26V14Q26 20 20 22V28H14V22Q8 20 8 14Z" fill={W} stroke={D} strokeWidth="2" /><path d="M8 1H26V5H8ZM10 28H24L26 33H8Z" fill={LB} stroke={B} strokeWidth="1.800" /></>,
  <><path d="M3-1H21L30 9V34.500H3Z" fill={W} stroke={D} strokeWidth="2" /><path d="M21-1V9H30" stroke={D} strokeWidth="2" /><rect x="7" y="19" width="5" height="12" fill={D} /><rect x="14" y="24" width="5" height="7" fill={D} /><rect x="21" y="14" width="5" height="17" fill={D} /></>,
  <><path d="M16 4H33V30H1V22" fill={W} stroke={D} strokeWidth="2" /><text x="6" y="22.500" textLength="25" fontSize="18" fontFamily="Open Sans" fill="#2288c9">123</text><path d="M4 26H30" stroke={G} strokeWidth="1.600" /><path d="M4 0H16L10 12L2 22H-2V8Z" fill="#f3f2f1" /><Bolt /></>,
  <><path d="M9 14L15 8V14Z" fill={B} /><path d="M19 1H32V13H19ZM14 18V31H1V18ZM19 27V31H24" stroke={G} strokeWidth="1.700" fill={W} /><Bolt /><Funnel /></>,
  <><path d="M16 1H33V15M1 22V33H22" stroke={D} strokeWidth="2" /><path d="M8 28L17 6L24 20M11 20H19" stroke="#2288c9" strokeWidth="2.200" /><Bolt /><Funnel /></>,
  <><path d="M18 1H33V15M1 22V33H22" stroke={D} strokeWidth="2" /><path d="M14 10.500H28M6 20H11V24H6ZM14 22H17" stroke={G} strokeWidth="1.800" /><Bolt /><Funnel /></>,
  <><path d="M1 16V33H20Q22 24 30 21H33V1H11" fill={LB} stroke={B} strokeWidth="2" /><path d="M12 4H31V8Q23 7 21 12Q20 18 15 20Q15 28 12 31H4V18Z" fill={W} /><path d="M-2 2Q-2-2 2-2H5Q9-2 9 2V11L3.500 18L-2 11Z" fill="#dd6b00" /><circle cx="3.500" cy="5" r="3" fill={W} /><circle cx="29" cy="29" r="5.500" fill="#dd6b00" stroke="#f3f2f1" /><circle cx="32.500" cy="19.500" r="3" fill="#dd6b00" /></>,
  <><path d="M13 1L1 16L13 32Q17 32 18 29L8 17L18 5Q16 1 13 1Z M20 1L33 16L20 32L8 17Z" fill={W} stroke="#8a2f9e" strokeWidth="2" strokeLinejoin="round" /><path d="M14 9L27 24M27 9L14 24" stroke="#8a2f9e" strokeWidth="2" /></>,
  <><path d="M3 2H21L33 16L21 30H3Q1 30 2 27L11 16L2 5Q1 2 3 2Z" fill={W} stroke="#1083e6" strokeWidth="2.200" strokeLinejoin="round" /><path d="M22 3L3 28M28 9L13 30" stroke="#1083e6" strokeWidth="2.200" /></>,
  <><circle cx="5.500" cy="14" r="1.900" fill="#252423" /><circle cx="17" cy="14" r="1.900" fill="#252423" /><circle cx="28.500" cy="14" r="1.900" fill="#252423" /></>,
];

const Collapse = ({ className }: { className: string }) => (
  <Svg w={24} h={24} className={className}><path d="M1 1L12 12L1 23M12 1L23 12L12 23" stroke="#252423" strokeWidth="2" /></Svg>
);

function Visualizations() {
  return (
    <div className="flex w-[341px] shrink-0 flex-col border-r border-[#dcdad8] bg-[#f3f2f1] text-[#252423]">
      <div className="flex h-[78px] shrink-0 items-start">
        <Fit className="ml-[15px] mt-[17px] w-[187px] text-[29px] font-semibold leading-[40px]">Visualizations</Fit>
        <Collapse className="ml-[99px] mt-[24px]" />
      </div>
      <Fit className="-mt-[6px] ml-[15px] w-[117px] text-[21.5px] font-semibold leading-[30px]">Build visual</Fit>
      <div className="mt-[7px] flex items-start pl-[15px]">
        <div className="size-[60px] rounded-[4px] bg-[#d2d0ce] pl-[7px] pt-[6px]">
          <Svg w={46} h={48}>
            <path d="M0 2H36" stroke="#1b1a19" strokeWidth="2.200" />
            <rect x="1" y="11" width="43" height="14" stroke="#1b1a19" strokeWidth="2.200" strokeDasharray="4 2.500" />
            <rect x="2.500" y="12.500" width="41" height="11.500" fill="#117865" />
            <rect x="1" y="31.500" width="43" height="14" stroke="#1b1a19" strokeWidth="2.200" strokeDasharray="4 2.500" />
            <rect x="2.500" y="33" width="41" height="11.500" fill="#117865" />
          </Svg>
        </div>
        <Svg w={46} h={46} className="ml-[72px] mt-[7px]">
          <path d="M8 45H1V1H20L33 15V18M19 1V15H33" stroke="#252423" strokeWidth="2" />
          <path d="M44 17Q42 16 39 19L24 34Q18 33 17 38Q16 42 10 42Q16 46 24 44Q31 41 29 36L43 21Q45 19 44 17ZM24 34Q28 34 29 37" stroke="#252423" strokeWidth="2" />
        </Svg>
      </div>
      <Svg w={340} h={17} className="mt-[8px]">
        <path d="M0 16H30L45.500 1L61 16H340" stroke="#8a8886" strokeWidth="2" />
      </Svg>
      <div className="ml-[21px] mt-[20px] grid h-[421px] shrink-0 grid-cols-[52px_repeat(5,53px)] content-start">
        {icons.map((ic, i) => (
          <div key={i} className="h-[53px]"><Svg w={34} h={34}>{ic}</Svg></div>
        ))}
      </div>
      <div className="flex flex-1 items-start border-t-2 border-[#e1dfdd]">
        <div className="shrink-0">
          <Fit className="ml-[22px] mt-[16px] w-[65px] text-[22px] leading-[30px]">Values</Fit>
          <div className="ml-[7px] mt-[10px] h-[54px] w-[321px] rounded-[3px] border border-dashed border-[#bebbb8] bg-white pl-[19px] pt-[9px]">
            <Fit className="w-[202px] text-[22px] leading-[30px]">Add data fields here</Fit>
          </div>
        </div>
        <div className="mt-[3px] h-[46px] w-[12px] rounded-full bg-[#8a8886]" />
      </div>
    </div>
  );
}

function TableRow({ label, className }: { label: string; className: string }) {
  return (
    <div className={"flex items-start pl-[29px] " + className}>
      <Svg w={13} h={22}><path d="M1 1L12 11L1 21" stroke="#252423" strokeWidth="1.700" /></Svg>
      <Svg w={23} h={23} className="ml-[11px]">
        <rect x="1" y="1" width="21" height="21" rx="4" stroke="#252423" strokeWidth="2" />
        <path d="M7 1V22M16 1V22M1 7H22M1 16H22" stroke="#252423" strokeWidth="1.600" />
      </Svg>
      <Fit className={"ml-[11px] -mt-[3px] text-[22px] leading-[30px] " + (label === "Sheet1" ? "w-[68px]" : "w-[63px]")}>{label}</Fit>
    </div>
  );
}

function DataPane() {
  return (
    <div className="flex flex-1 flex-col bg-[#f3f2f1] text-[#252423]">
      <div className="flex h-[86px] shrink-0 items-start">
        <Fit className="ml-[15px] mt-[17px] w-[64px] text-[29px] font-semibold leading-[40px]">Data</Fit>
        <Collapse className="ml-auto mr-[14px] mt-[24px]" />
      </div>
      <div className="ml-[7px] flex h-[46px] w-[325px] items-start rounded-[6px] border border-b-[#616161] border-l-[#d1d1d1] border-r-[#d1d1d1] border-t-[#d1d1d1] bg-white">
        <Svg w={27} h={27} className="ml-[22px] mt-[9px]">
          <circle cx="11" cy="11" r="9.800" stroke="#5c5a58" strokeWidth="1.900" />
          <path d="M18 18L26 26" stroke="#5c5a58" strokeWidth="2.200" />
        </Svg>
        <Fit className="ml-[13px] mt-[8px] w-[78px] text-[25px] leading-[30px] text-[#707070]">Search</Fit>
      </div>
      <TableRow label="Sheet1" className="mt-[28px]" />
      <TableRow label="Table1" className="mt-[18px]" />
    </div>
  );
}

function StatusBar() {
  return (
    <div className="flex h-[45px] items-start border-b-2 border-t-2 border-b-black border-t-[#e1dfdd] bg-[#f3f2f1] text-[#484644]">
      <Fit className="ml-[7px] mt-[7px] w-[113px] text-[22px] leading-[30px]">Page 2 of 3</Fit>
      <Svg w={230} h={24} className="ml-auto mt-[10px]">
        <path d="M0 12.500H8" stroke="#605e5c" strokeWidth="2.600" />
        <path d="M17 12H206" stroke="#605e5c" strokeWidth="2" />
        <rect x="50" y="1" width="8" height="21" fill="#605e5c" />
        <path d="M112 7V17" stroke="#605e5c" strokeWidth="2" />
        <path d="M217 12H230M223.500 6V18.500" stroke="#605e5c" strokeWidth="2.600" />
      </Svg>
      <Fit className="ml-[26px] mt-[5px] w-[43px] text-[22px] leading-[30px] text-[#605e5c]">45%</Fit>
      <Svg w={30} h={22} className="ml-[37px] mr-[33px] mt-[10px]">
        <rect x="1" y="1" width="28" height="20" stroke="#605e5c" strokeWidth="2" />
        <path d="M4.500 8V4.500H9M21 4.500H25.500V8M25.500 14V17.500H21M9 17.500H4.500V14" stroke="#605e5c" strokeWidth="2" />
      </Svg>
    </div>
  );
}

function Task({ children, dot, className = "" }: { children: React.ReactNode; dot?: boolean; className?: string }) {
  return (
    <div className={"flex w-[44px] shrink-0 flex-col items-center pt-[11px] " + className}>
      <Svg w={24} h={24}>{children}</Svg>
      {dot && <div className="mt-[4px] h-[3px] w-[6px] rounded-full bg-[#85827a]" />}
    </div>
  );
}

function Taskbar() {
  return (
    <div className="flex h-[48px] items-start bg-[linear-gradient(180deg,rgba(60,60,40,0.2),rgba(60,60,40,0.06)_45%,transparent_80%),linear-gradient(90deg,#f9e5e4_0%,#f5e5d8_12%,#f6e5cb_22%,#eae8cc_28%,#dcebdc_31%,#efe7cd_36%,#f3e7c5_44%,#e6e1d6_52%,#dfdfdd_60%,#ebe5cc_67%,#f3eac3_70%,#f0edc6_80%,#eaedc6_92%,#ebeccf_100%)] text-[#1b1a19]">
      <Svg w={26} h={30} className="ml-[19px] mt-[5px]">
        <path d="M5 24Q0 23 0 18Q1 13 6 13Q9 6 16 9Q24 12 24 18Q23 24 18 24Z" fill="#8ab4ee" />
        <path d="M18 19Q22 24 21.500 28Q18 31 15 28Q14 24 18 19Z" fill="#1560e0" />
        <circle cx="19" cy="8" r="8" fill="#b3281e" />
        <text x="15.700" y="12.500" fontSize="11.500" fontFamily="Open Sans" fill="#fff">4</text>
      </Svg>
      <div className="ml-[5px] mt-[8px] w-[54px] shrink-0">
        <Fit className="w-[25px] text-[11.5px] leading-[16px]">13°C</Fit>
        <Fit className="w-[51px] text-[11.5px] leading-[16px] text-[#555]">Light rain</Fit>
      </div>
      <Svg w={24} h={24} className="ml-[469px] mt-[12px]">
        <path d="M0 0H11.500V11.500H0Z" fill="#35a9e2" /><path d="M12.500 0H24V11.500H12.500Z" fill="#2296dc" /><path d="M0 12.500H11.500V24H0Z" fill="#1485d6" /><path d="M12.500 12.500H24V24H12.500Z" fill="#0673cd" />
      </Svg>
      <div className="ml-[13px] mt-[8px] flex h-[31px] w-[218px] shrink-0 items-start rounded-full border border-[#d2cfc5] bg-[#ebeae4]">
        <Svg w={15} h={16} className="ml-[10px] mt-[7px]"><circle cx="8" cy="6" r="5.300" stroke="#222" strokeWidth="1.700" /><path d="M11.500 10L15 14.500" stroke="#222" strokeWidth="2" /></Svg>
        <Fit className="ml-[9px] mt-px w-[71px] text-[23px] leading-[30px] text-[#55534f]">Search</Fit>
      </div>
      <Task className="ml-[4px]"><rect x="0" y="6" width="18" height="17" rx="2" fill="#262626" /><rect x="6" y="0" width="18" height="17" rx="1" fill="#eee" opacity=".85" /></Task>
      <Task><path d="M17 0L24 3V21L17 24L6 14L2 17L0 16V8L2 7L6 10ZM17 7L10 12L17 17Z" fill="#1684cf" fillRule="evenodd" /><path d="M17 0L24 3V21L17 24Z" fill="#2ba3ee" /></Task>
      <Task dot><path d="M0 2Q0 1 1 1H9L11 4H23Q24 4 24 5V22H0Z" fill="#c98f14" /><rect x="0" y="6" width="24" height="17" rx="1" fill="#f4c33c" /><path d="M4 23V18Q4 16 6 16H18Q20 16 20 18V23Z" fill="#1f7fd0" /></Task>
      <div className="flex w-[44px] shrink-0 justify-center pt-[11px]"><CopilotIcon id="tb" w={25} h={23} /></div>
      <Task><circle cx="12" cy="12" r="12" fill="#1473c4" /><path d="M1 9Q4 0 13 0Q24 1 24 11Q23 16 17 16Q13 16 14 13Q15 8 10 7Q4 6 1 9Z" fill="#3fc49b" /><path d="M8 12Q8 22 18 21Q21 21 22 19Q18 25 11 24Q2 22 2 14Q4 7 10 7Q8 9 8 12Z" fill="#0d56a2" /><path d="M12 12Q11 18 18 19L22 18L24 14L20 16Q13 17 14 12Z" fill="#e5e2d8" /></Task>
      <div className="relative flex w-[44px] shrink-0 justify-center pt-[11px]">
        <CopilotIcon id="m3" w={25} h={23} />
        <div className="absolute left-[15px] top-[27px] h-[8px] w-[20px] bg-black text-center text-[7.5px] font-bold leading-[8px] text-white">M365</div>
      </div>
      <Task><path d="M0 7L14 0H24V17L14 24H0Z" fill="#22d39a" /><path d="M0 7L10 2V24H0Z" fill="#17b9e0" /><path d="M16 0H24V14L18 8Z" fill="#e8f14a" /><rect x="4" y="4" width="16" height="16" fill="#050505" /><text x="5.500" y="11.500" fontSize="8" fontFamily="Open Sans" fontWeight="700" fill="#fff">PC</text><path d="M6 17H12" stroke="#fff" strokeWidth="1.300" /></Task>
      <Task><rect x="6" y="1" width="18" height="22" rx="2" fill="#2b7cd3" /><rect x="6" y="1" width="18" height="6" fill="#41a5ee" /><rect x="6" y="12" width="18" height="6" fill="#185abd" /><rect x="6" y="17" width="18" height="6" fill="#103f91" /><rect x="0" y="6" width="13" height="12" rx="1" fill="#185abd" /><text x="1.500" y="15.500" fontSize="10" fontFamily="Open Sans" fontWeight="700" fill="#fff">W</text></Task>
      <Task><path d="M7 6V1H17V6" stroke="#2eb2e6" strokeWidth="2" /><path d="M1 5H23V20Q23 24 19 24H5Q1 24 1 20Z" fill="#164a7c" /><rect x="7" y="10" width="4.500" height="4.500" fill="#f25022" /><rect x="12.500" y="10" width="4.500" height="4.500" fill="#7fba00" /><rect x="7" y="15.500" width="4.500" height="4.500" fill="#00a4ef" /><rect x="12.500" y="15.500" width="4.500" height="4.500" fill="#ffb900" /></Task>
      <Task dot><circle cx="12" cy="12" r="12" fill="#fbc116" /><path d="M12 12L1.600 6A12 12 0 0 1 22.400 6Z" fill="#dc3b2e" /><path d="M1.600 6A12 12 0 0 0 11 24L17 14L12 12L7 15Z" fill="#2f9e4f" /><circle cx="12" cy="12" r="6" fill="#fff" /><circle cx="12" cy="12" r="4.700" fill="#2f7de8" /></Task>
      <div className="ml-[2px] mt-[4px] flex h-[39px] w-[40px] shrink-0 flex-col items-center rounded-[4px] bg-[#f4f1e6] pt-[7px]">
        <Svg w={24} h={24}><rect width="24" height="24" fill="#0667b8" /><path d="M13 0H20V24H13Z" fill="#b37c0c" /><path d="M8 6H15V24H8Z" fill="#eab92f" /><path d="M2 12H9V24H2Z" fill="#f7d565" /><path d="M15 6H20V24H15Z" fill="#d49d1c" /></Svg>
        <div className="mt-[4px] h-[3px] w-[16px] rounded-full bg-[#0078d4]" />
      </div>
      <Task dot className="ml-[2px]"><rect x="1" y="1" width="22" height="22" rx="2" fill="#315fc4" /><path d="M14 1H21Q23 1 23 3V20Z" fill="#6a4bb0" /><path d="M1 23L11 10L22 23Z" fill="#4dc6f0" /><path d="M1 21L11 10L15 14L7 23H1Z" fill="#1d95dc" /><circle cx="17.500" cy="5" r="2" fill="#fff" /></Task>
      <Svg w={12} h={8} className="ml-auto mt-[19px]"><path d="M1 7L6 1.500L11 7" stroke="#1b1a19" strokeWidth="1.600" /></Svg>
      <Svg w={16} h={13} className="ml-[18px] mt-[16px]">
        <path d="M.7 5Q8-3 15.300 5M3 7.500Q8 2 13 7.500M5.300 10Q8 7 10.700 10" stroke="#1b1a19" strokeWidth="1.200" /><circle cx="8" cy="11.500" r="1.300" fill="#1b1a19" />
      </Svg>
      <Svg w={16} h={13} className="ml-[8px] mt-[16px]">
        <path d="M.7 4.500H3.500L7 1V12L3.500 8.500H.7ZM9 4.500Q10.300 6.500 9 8.500M11 3Q13.300 6.500 11 10" stroke="#1b1a19" strokeWidth="1.200" /><path d="M13 1.500Q16.300 6.500 13 11.500" stroke="#aaa" strokeWidth="1.200" />
      </Svg>
      <Svg w={17} h={13} className="ml-[8px] mt-[16px]">
        <rect x="1" y="3" width="13" height="8.500" rx="1.500" stroke="#1b1a19" strokeWidth="1.300" /><rect x="5" y="5" width="8" height="5" fill="#1b1a19" /><path d="M15.500 6V9" stroke="#1b1a19" strokeWidth="2" /><path d="M3-1L1 5H5L3 9" stroke="#1b1a19" strokeWidth="1.800" />
      </Svg>
      <div className="ml-[16px] mr-[19px] mt-[8px] flex w-[62px] shrink-0 flex-col items-end">
        <Fit className="w-[29px] text-[11.5px] leading-[16px]">16:46</Fit>
        <Fit className="w-[62px] text-[11.5px] leading-[16px]">19/10/2025</Fit>
      </div>
    </div>
  );
}

export default function App() {
  return (
    <div className="flex h-[1080px] w-[1920px] flex-col overflow-hidden bg-[#f3f2f1] font-['Open_Sans','Noto_Sans',sans-serif]">
      <div className="relative z-10 shrink-0 bg-[#fafafa] shadow-[0_2px_8px_rgba(0,0,0,0.28)]">
        <TitleBar />
        <Menu />
        <Ribbon />
      </div>
      <div className="flex h-[779px] shrink-0">
        <SideNav />
        <div className="flex w-[1163px] shrink-0 flex-col">
          <div className="flex h-[712px] shrink-0">
            <div className="h-[712px] w-[1100px] shrink-0 overflow-hidden bg-white"><Report /></div>
            <Filters />
          </div>
          <PageTabs />
        </div>
        <Visualizations />
        <DataPane />
      </div>
      <div className="shrink-0"><StatusBar /></div>
      <Taskbar />
    </div>
  );
}
